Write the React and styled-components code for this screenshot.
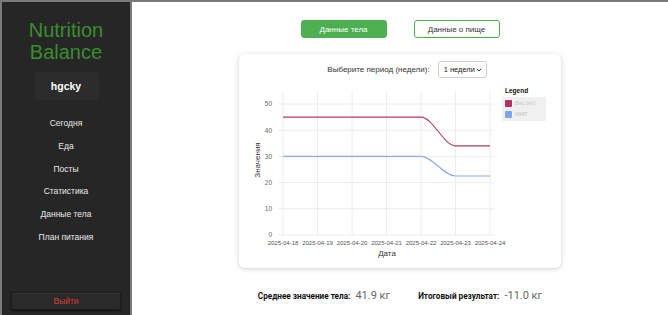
import React, { useState } from 'react';
import styled, { createGlobalStyle } from 'styled-components';

const GlobalStyle = createGlobalStyle`
  html, body {
    margin: 0;
    padding: 0;
    background: #ffffff;
    font-family: 'Liberation Sans', Arial, sans-serif;
  }
  * {
    box-sizing: border-box;
  }
`;

const dates = ['2025-04-18', '2025-04-19', '2025-04-20', '2025-04-21', '2025-04-22', '2025-04-23', '2025-04-24'];
const weight = [45, 45, 45, 45, 45, 34, 34];
const bmi = [30, 30, 30, 30, 30, 22.5, 22.5];
const menu = ['Сегодня', 'Еда', 'Посты', 'Статистика', 'Данные тела', 'План питания'];

const X0 = 40;
const STEP = 34.5;
const px = (i) => X0 + i * STEP;
const py = (v) => 151 - v * 2.62;

// monotone-like path: flat runs stay flat, changes get horizontal tangents
const buildPath = (values) => {
  let d = `M${px(0)},${py(values[0])}`;
  for (let i = 1; i < values.length; i++) {
    const xa = px(i - 1);
    const xb = px(i);
    const k = (xb - xa) / 3;
    d += ` C${xa + k},${py(values[i - 1])} ${xb - k},${py(values[i])} ${xb},${py(values[i])}`;
  }
  return d;
};

function Chart() {
  const ticks = [0, 10, 20, 30, 40, 50];
  return (
    <ChartSvg width="258" height="178" viewBox="0 0 258 178">
      {ticks.map((t) => (
        <g key={t}>
          <line x1="36" x2="251" y1={py(t)} y2={py(t)} stroke="#ececec" strokeWidth="1" />
          <text x="29" y={py(t) + 2.3} fontSize="6.5" fill="#666" textAnchor="end">
            {t}
          </text>
        </g>
      ))}
      {dates.map((d, i) => (
        <g key={d}>
          <line x1={px(i)} x2={px(i)} y1="7" y2={py(0)} stroke="#ececec" strokeWidth="1" />
          <text x={px(i)} y="161" fontSize="6" fill="#555" textAnchor="middle">
            {d}
          </text>
        </g>
      ))}
      <path d={buildPath(weight)} fill="none" stroke="#b23b62" strokeWidth="1.1" />
      <path d={buildPath(bmi)} fill="none" stroke="#8aaeec" strokeWidth="1.1" />
      <text x="144" y="172" fontSize="8" fill="#333" textAnchor="middle">
        Дата
      </text>
      <text
        x="17"
        y="76"
        fontSize="8"
        fill="#333"
        textAnchor="middle"
        transform="rotate(-90 17 76)"
      >
        Значения
      </text>
    </ChartSvg>
  );
}

function App() {
  const [period, setPeriod] = useState('1');
  const [tab, setTab] = useState('body');

  return (
    <>
      <GlobalStyle />
      <Layout>
        <Sidebar>
          <Brand>
            Nutrition
            <br />
            Balance
          </Brand>
          <UserBox>hgcky</UserBox>
          <Nav>
            {menu.map((item) => (
              <NavItem key={item}>{item}</NavItem>
            ))}
          </Nav>
          <Logout>Выйти</Logout>
        </Sidebar>
        <Main>
          <Tabs>
            <TabButton $active={tab === 'body'} onClick={() => setTab('body')}>
              Данные тела
            </TabButton>
            <TabButton $active={tab === 'food'} onClick={() => setTab('food')}>
              Данные о пище
            </TabButton>
          </Tabs>
          <Card>
            <PeriodRow>
              <PeriodLabel>Выберите период (недели):</PeriodLabel>
              <SelectWrap>
                <PeriodSelect value={period} onChange={(e) => setPeriod(e.target.value)}>
                  <option value="1">1 недели</option>
                  <option value="2">2 недели</option>
                  <option value="4">4 недели</option>
                </PeriodSelect>
                <Chevron width="6" height="4" viewBox="0 0 6 4">
                  <path d="M0.8 0.8 L3 3 L5.2 0.8" fill="none" stroke="#333" strokeWidth="1" />
                </Chevron>
              </SelectWrap>
            </PeriodRow>
            <ChartRow>
              <Chart />
              <Legend>
                <LegendTitle>Legend</LegendTitle>
                <LegendBox>
                  <LegendItem>
                    <Swatch $color="#b03261" />
                    Вес (кг)
                  </LegendItem>
                  <LegendItem>
                    <Swatch $color="#7ea7ea" />
                    ИМТ
                  </LegendItem>
                </LegendBox>
              </Legend>
            </ChartRow>
          </Card>
          <Stats>
            <Stat>
              <StatLabel>Среднее значение тела:</StatLabel>
              <StatValue>41.9 кг</StatValue>
            </Stat>
            <Stat>
              <StatLabel>Итоговый результат:</StatLabel>
              <StatValue>-11.0 кг</StatValue>
            </Stat>
          </Stats>
        </Main>
      </Layout>
    </>
  );
}

const Layout = styled.div`
  display: flex;
  height: 315px;
  border-top: 2px solid #7b7b7b;
  border-left: 2px solid #7b7b7b;
  overflow: hidden;
`;

const Sidebar = styled.aside`
  width: 130px;
  flex-shrink: 0;
  background: #262626;
  border-right: 2px solid #7b7b7b;
  display: flex;
  flex-direction: column;
  align-items: center;
  padding: 17px 8px 5px;
`;

const Brand = styled.div`
  color: #3b8c30;
  font-size: 20px;
  line-height: 22px;
  text-align: center;
`;

const UserBox = styled.div`
  margin-top: 9px;
  width: 65px;
  height: 28px;
  border-radius: 4px;
  background: #2c2c2c;
  color: #ffffff;
  font-weight: bold;
  font-size: 10.5px;
  display: flex;
  align-items: center;
  justify-content: center;
`;

const Nav = styled.nav`
  margin-top: 18px;
  display: flex;
  flex-direction: column;
  align-items: center;
  gap: 12.8px;
`;

const NavItem = styled.div`
  color: #e8e8e8;
  font-size: 8.5px;
  line-height: 10px;
  cursor: pointer;
`;

const Logout = styled.button`
  margin-top: auto;
  width: 110px;
  height: 18px;
  background: #2a2a2a;
  border: 1px solid #1c1c1c;
  border-radius: 2px;
  box-shadow: 0 1px 2px rgba(0, 0, 0, 0.6), inset 0 1px 0 rgba(255, 255, 255, 0.05);
  color: #d83a34;
  font-family: 'Liberation Sans', Arial, sans-serif;
  font-size: 8.5px;
  cursor: pointer;
`;

const Main = styled.main`
  flex: 1;
  display: flex;
  flex-direction: column;
  align-items: center;
  padding-top: 18px;
`;

const Tabs = styled.div`
  display: flex;
  gap: 27px;
`;

const TabButton = styled.button`
  width: 86px;
  height: 18px;
  border-radius: 3px;
  border: 1.5px solid #4caf50;
  background: ${(p) => (p.$active ? '#4caf50' : '#ffffff')};
  color: ${(p) => (p.$active ? '#ffffff' : '#333333')};
  font-family: 'Liberation Sans', Arial, sans-serif;
  font-size: 8px;
  cursor: pointer;
`;

const Card = styled.section`
  margin-top: 16px;
  width: 322px;
  height: 214px;
  background: #ffffff;
  border-radius: 6px;
  box-shadow: 0 1px 5px rgba(0, 0, 0, 0.2);
  padding: 7px 4px 0;
  display: flex;
  flex-direction: column;
`;

const PeriodRow = styled.div`
  display: flex;
  justify-content: center;
  align-items: center;
  gap: 8px;
  padding-left: 14px;
`;

const PeriodLabel = styled.span`
  font-size: 8px;
  color: #333;
`;

const SelectWrap = styled.div`
  position: relative;
  display: flex;
`;

const PeriodSelect = styled.select`
  appearance: none;
  -webkit-appearance: none;
  width: 49px;
  height: 17px;
  border: 1px solid #cfcfcf;
  border-radius: 3px;
  background: #fff;
  font-family: 'Liberation Sans', Arial, sans-serif;
  font-size: 7.5px;
  color: #222;
  padding: 0 10px 0 5px;
  outline: none;
`;

const Chevron = styled.svg`
  position: absolute;
  right: 5px;
  top: 7px;
  pointer-events: none;
`;

const ChartSvg = styled.svg`
  overflow: visible;
  flex-shrink: 0;
`;

const ChartRow = styled.div`
  margin-top: 6px;
  display: flex;
`;

const Legend = styled.div`
  margin-left: 1px;
  padding-top: 2px;
  display: flex;
  flex-direction: column;
`;

const LegendTitle = styled.div`
  font-size: 6.5px;
  font-weight: bold;
  color: #111;
  padding-left: 3px;
  line-height: 9px;
`;

const LegendBox = styled.div`
  margin-top: 2px;
  width: 44px;
  background: #f0f0f0;
  padding: 3px 3px;
  display: flex;
  flex-direction: column;
  gap: 4px;
`;

const LegendItem = styled.div`
  display: flex;
  align-items: center;
  gap: 3px;
  font-size: 5.8px;
  color: #c4c4c4;
  line-height: 7px;
`;

const Swatch = styled.span`
  width: 7px;
  height: 7px;
  border-radius: 1px;
  background: ${(p) => p.$color};
`;

const Stats = styled.div`
  margin-top: 21px;
  display: flex;
  gap: 28px;
  font-family: Roboto, 'Liberation Sans', sans-serif;
`;

const Stat = styled.div`
  display: flex;
  align-items: baseline;
  gap: 5px;
`;

const StatLabel = styled.span`
  font-size: 8.2px;
  font-weight: bold;
  color: #111;
`;

const StatValue = styled.span`
  font-size: 11px;
  color: #666;
`;

export default App;
